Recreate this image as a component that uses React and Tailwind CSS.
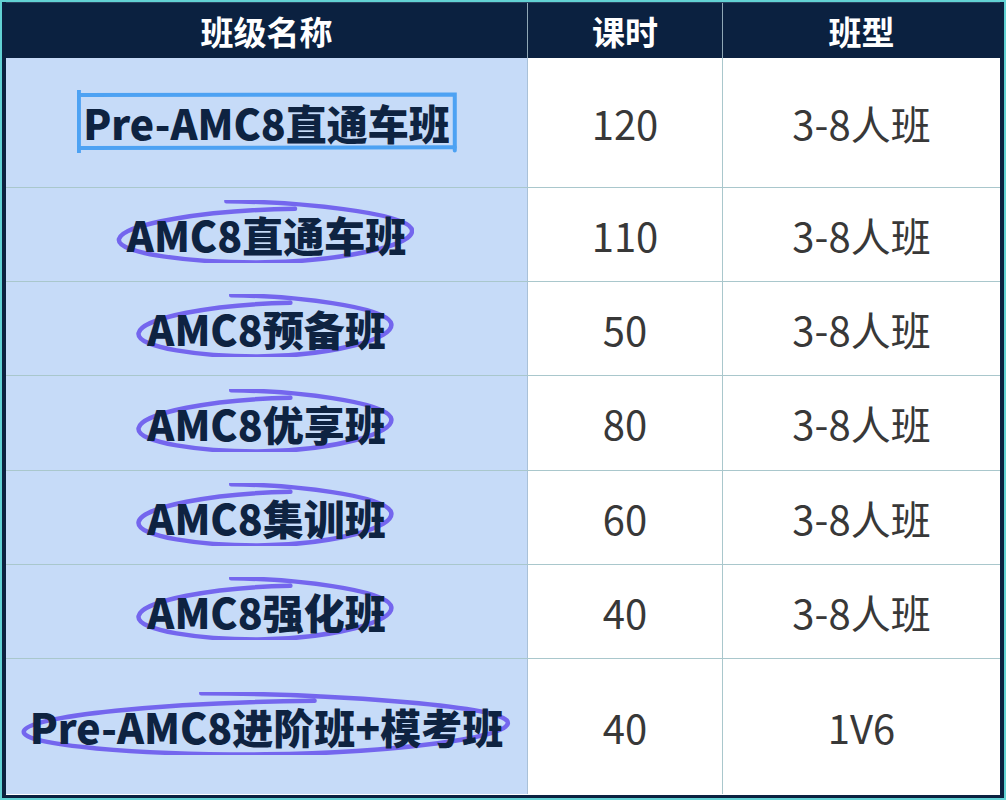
import React from 'react';

const rows = [
  { name: 'Pre-AMC8直通车班', hours: '120', type: '3-8人班', h: 'h-[130px]', mark: 'box' },
  { name: 'AMC8直通车班', hours: '110', type: '3-8人班', h: 'h-[94px]', mark: 'loop' },
  { name: 'AMC8预备班', hours: '50', type: '3-8人班', h: 'h-[94px]', mark: 'loop' },
  { name: 'AMC8优享班', hours: '80', type: '3-8人班', h: 'h-[95px]', mark: 'loop' },
  { name: 'AMC8集训班', hours: '60', type: '3-8人班', h: 'h-[94px]', mark: 'loop' },
  { name: 'AMC8强化班', hours: '40', type: '3-8人班', h: 'h-[94px]', mark: 'loop' },
  { name: 'Pre-AMC8进阶班+模考班', hours: '40', type: '1V6', h: 'h-[135px]', mark: 'loop', last: true },
];

// 手绘圈
const Loop = () => (
  <svg
    className="absolute -left-[11px] -top-[14px] w-[calc(100%+19px)] h-[calc(100%+22px)] pointer-events-none"
    viewBox="0 0 100 100"
    preserveAspectRatio="none"
    fill="none"
  >
    <path
      d="M37 2 C62 3 96 20 99 45 C102 72 75 97 50 99 C25 100 0 85 1 62 C2 38 30 16 60 14"
      stroke="#7466ee"
      strokeWidth="4.5"
      strokeLinecap="round"
      vectorEffect="non-scaling-stroke"
    />
  </svg>
);

// 手绘框
const Box = () => (
  <svg
    className="absolute -left-[6px] -top-[12px] w-[calc(100%+13px)] h-[calc(100%+22px)] pointer-events-none"
    viewBox="0 0 100 100"
    preserveAspectRatio="none"
    fill="none"
  >
    <g stroke="#4da2f3" strokeWidth="4" strokeLinecap="round">
      <path d="M0.5 0 L0.5 100" vectorEffect="non-scaling-stroke" />
      <path d="M0.5 8 L99.5 7 L99.5 96" vectorEffect="non-scaling-stroke" />
      <path d="M0.5 92 L99.5 91" vectorEffect="non-scaling-stroke" />
    </g>
  </svg>
);

const App = () => {
  return (
    <div className="w-[1006px] h-[800px] bg-[#62d2d4] p-[2px] font-['Noto_Sans_CJK_SC','Noto_Sans',sans-serif]">
      <div className="w-full h-full flex flex-col border-x-4 border-b-[3px] border-[#0b2140] bg-white">
        {/* 表头 */}
        <div className="h-[56px] grid grid-cols-[522px_195px_1fr] bg-[#0b2140] border-t border-[#2a4360] text-white text-[33px] font-bold">
          <div className="flex items-center justify-center pt-[2px] border-r border-[#8fa7b5]">班级名称</div>
          <div className="flex items-center justify-center pt-[2px] border-r border-[#8fa7b5]">课时</div>
          <div className="flex items-center justify-center pt-[2px]">班型</div>
        </div>

        {/* 表格内容 */}
        {rows.map((row) => (
          <div
            key={row.name}
            className={`${row.h} grid grid-cols-[522px_195px_1fr] ${row.last ? '' : 'border-b border-[#a9c7cc]'}`}
          >
            <div className="flex items-center justify-center bg-[#c6dbf8] border-r border-[#a9c1d8]">
              <span className="relative inline-block">
                {row.mark === 'box' ? <Box /> : <Loop />}
                <span className="relative block text-[41px] leading-none font-black text-[#0e2341] whitespace-nowrap">
                  {row.name}
                </span>
              </span>
            </div>
            <div className="flex items-center justify-center border-r border-[#a9c7cc] text-[40px] text-[#383838]">
              {row.hours}
            </div>
            <div className="flex items-center justify-center text-[40px] text-[#383838]">
              {row.type}
            </div>
          </div>
        ))}
      </div>
    </div>
  );
};

export default App;
